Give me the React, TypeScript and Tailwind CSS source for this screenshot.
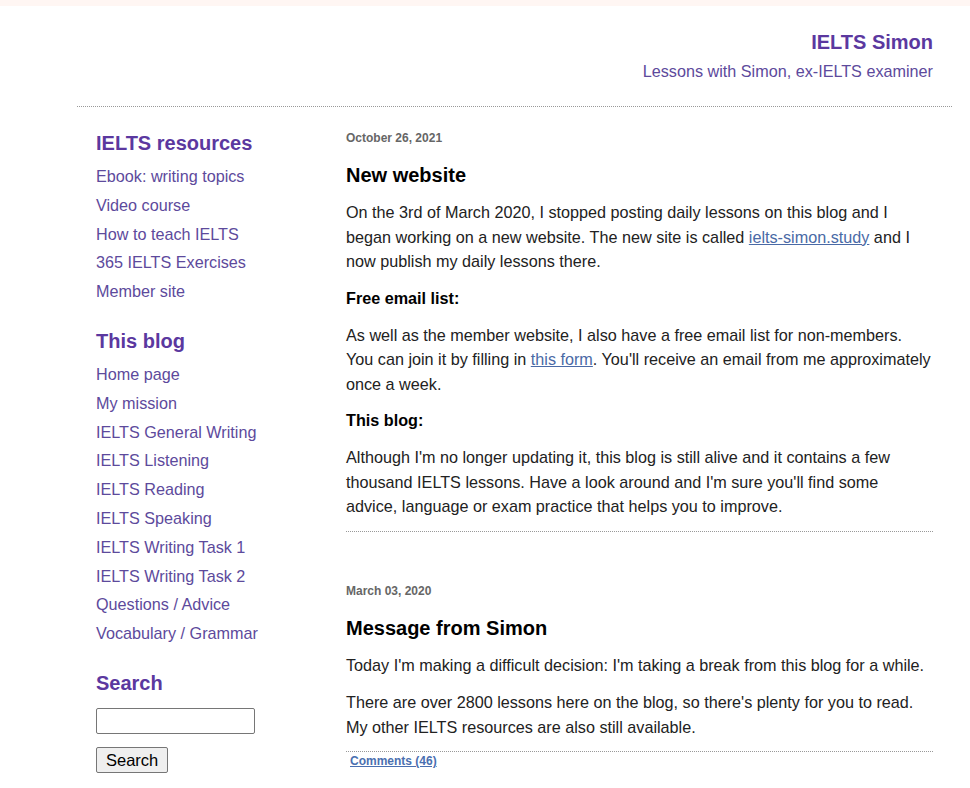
const resources = ["Ebook: writing topics", "Video course", "How to teach IELTS", "365 IELTS Exercises", "Member site"];

const blogLinks = [
  "Home page",
  "My mission",
  "IELTS General Writing",
  "IELTS Listening",
  "IELTS Reading",
  "IELTS Speaking",
  "IELTS Writing Task 1",
  "IELTS Writing Task 2",
  "Questions / Advice",
  "Vocabulary / Grammar",
];

function SideList({ items, top }: { items: string[]; top: string }) {
  return (
    <ul className={top}>
      {items.map((item) => (
        <li key={item} className="text-[16.2px] leading-[28.8px] text-[#5d4a9c]">
          <a href="#">{item}</a>
        </li>
      ))}
    </ul>
  );
}

export default function App() {
  return (
    <div className="min-h-screen bg-white text-[#222] font-['Liberation_Sans',Arial,sans-serif]">
      {/* top strip */}
      <div className="h-[6px] bg-[#fff6f3]" />

      <div className="ml-[77px] w-[875px]">
        {/* HEADER */}
        <div className="text-right pr-[19px] pt-[24px] pb-[23px] border-b border-dotted border-[#999]">
          <h1 className="text-[20px] leading-[24px] font-bold text-[#5b389f]">IELTS Simon</h1>
          <p className="mt-[5px] text-[16.2px] leading-[24px] text-[#5d4a9c]">Lessons with Simon, ex-IELTS examiner</p>
        </div>

        <div className="flex px-[19px]">
          {/* SIDEBAR */}
          <div className="w-[250px] shrink-0 pt-[24px]">
            <h2 className="text-[20px] leading-[24px] font-bold text-[#5b389f]">IELTS resources</h2>
            <SideList items={resources} top="mt-[7px]" />

            <h2 className="mt-[23px] text-[20px] leading-[24px] font-bold text-[#5b389f]">This blog</h2>
            <SideList items={blogLinks} top="mt-[7px]" />

            <h2 className="mt-[23px] text-[20px] leading-[24px] font-bold text-[#5b389f]">Search</h2>
            <input
              type="text"
              className="block mt-[13px] w-[159px] h-[26px] border border-[#767676] rounded-[2px] px-1 text-[13px]"
            />
            <button className="mt-[13px] h-[26px] px-[9px] border border-[#767676] rounded-[2px] bg-[#efefef] text-[16.5px] text-black leading-[20px]">
              Search
            </button>
          </div>

          {/* MAIN */}
          <div className="flex-1 pt-[23px] text-[16.2px]">
            {/* POST 1 */}
            <div className="border-b border-dotted border-[#999] pb-[12px]">
              <p className="text-[12px] leading-[16px] font-bold text-[#666]">October 26, 2021</p>
              <h3 className="mt-[17px] text-[20px] leading-[24px] font-bold text-black">New website</h3>
              <p className="mt-[13px] leading-[24.5px]">
                On the 3rd of March 2020, I stopped posting daily lessons on this blog and I began working on a new
                website. The new site is called{" "}
                <a href="#" className="underline text-[#4a6aa6]">ielts-simon.study</a> and I now publish my daily
                lessons there.
              </p>
              <p className="mt-[12px] leading-[24px] font-bold text-black">Free email list:</p>
              <p className="mt-[13px] leading-[24.5px]">
                As well as the member website, I also have a free email list for non-members. You can join it by
                filling in <a href="#" className="underline text-[#4a6aa6]">this form</a>. You'll receive an email
                from me approximately once a week.
              </p>
              <p className="mt-[12px] leading-[24px] font-bold text-black">This blog:</p>
              <p className="mt-[13px] leading-[24.5px]">
                Although I'm no longer updating it, this blog is still alive and it contains a few thousand IELTS
                lessons. Have a look around and I'm sure you'll find some advice, language or exam practice that
                helps you to improve.
              </p>
            </div>

            {/* POST 2 */}
            <div className="pt-[51px]">
              <p className="text-[12px] leading-[16px] font-bold text-[#666]">March 03, 2020</p>
              <h3 className="mt-[17px] text-[20px] leading-[24px] font-bold text-black">Message from Simon</h3>
              <p className="mt-[13px] leading-[24.5px]">
                Today I'm making a difficult decision: I'm taking a break from this blog for a while.
              </p>
              <p className="mt-[13px] leading-[24.5px] border-b border-dotted border-[#999] pb-[12px]">
                There are over 2800 lessons here on the blog, so there's plenty for you to read. My other IELTS
                resources are also still available.
              </p>
              <a href="#" className="block w-fit ml-[4px] mt-[1px] text-[12px] leading-[16px] font-bold underline text-[#4a6fb0]">
                Comments (46)
              </a>
            </div>
          </div>
        </div>
      </div>
    </div>
  );
}
